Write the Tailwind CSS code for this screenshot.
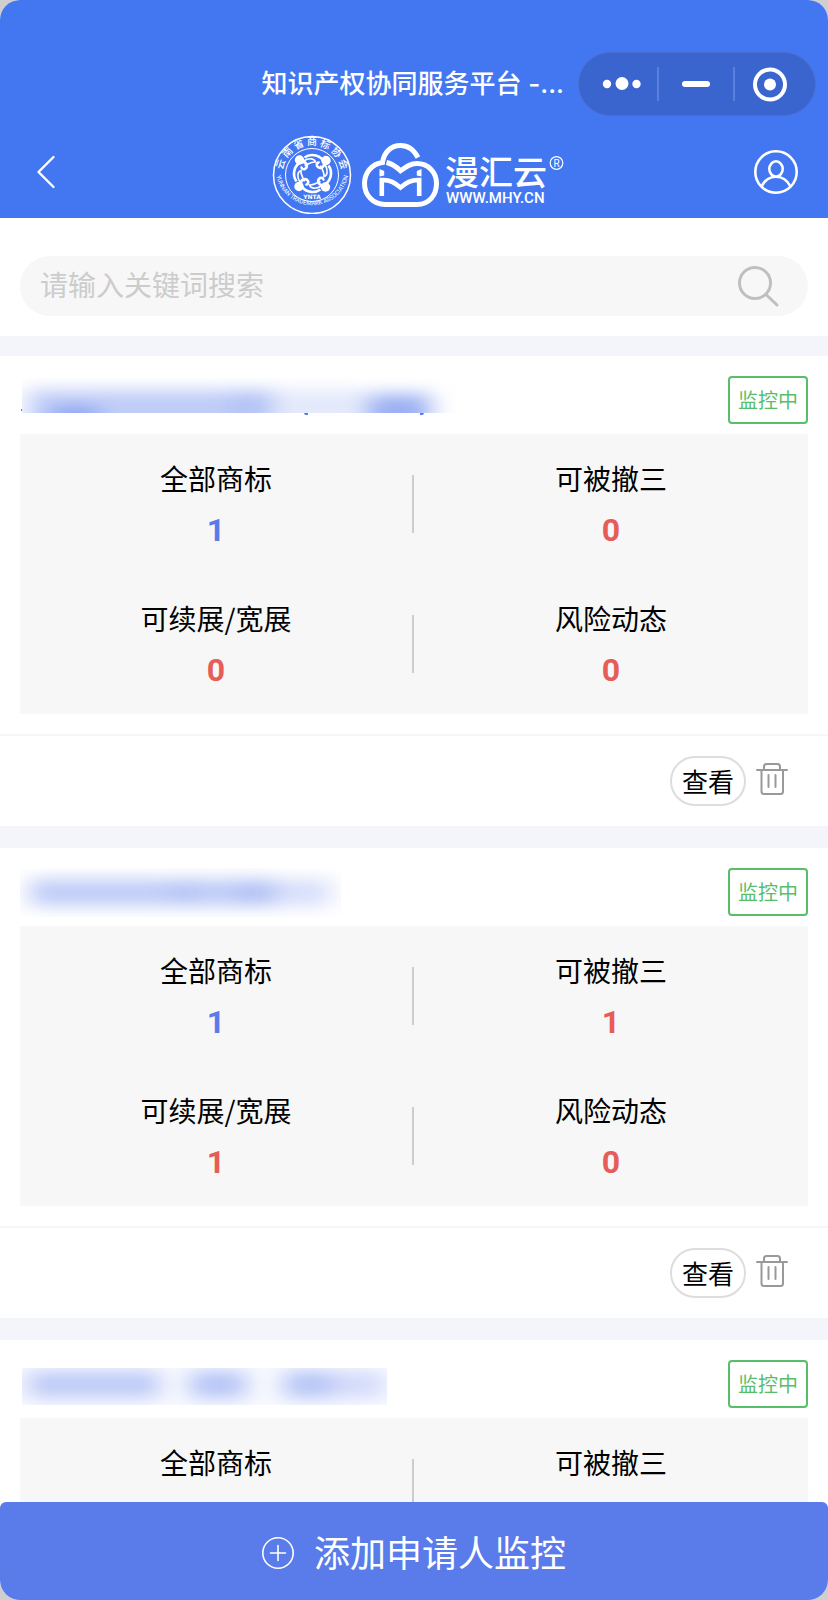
<!DOCTYPE html>
<html lang="zh-CN">
<head>
<meta charset="utf-8">
<meta name="viewport" content="width=device-width, initial-scale=1">
<title>知识产权协同服务平台</title>
<script src="https://cdn.jsdelivr.net/npm/@tailwindcss/browser@4"></script>
</head>
<body class="bg-[#cfcfcf] font-['Noto_Sans_CJK_SC',sans-serif] text-black">
<svg class="hidden" aria-hidden="true">
  <symbol id="trash" viewBox="0 0 32 34" fill="none" stroke="#999" stroke-width="2" stroke-linecap="round" stroke-linejoin="round">
    <path d="M1 8H31M8 8V4.500Q8 2 10.500 2H21.500Q24 2 24 4.500V8M5.500 8V29.500Q5.500 32 8 32H24.500Q27 32 27 29.500V8M12.500 13V25M19.500 13V25"/>
  </symbol>
</svg>
<div class="flex h-screen flex-col overflow-hidden rounded-[20px] bg-white">
  <header class="shrink-0 bg-[#4377f2] pt-[52px] pb-1 text-white">
    <div class="flex items-center justify-end gap-[14px] pr-3">
      <h1 class="font-[Inter,'Noto_Sans_CJK_SC',sans-serif] text-[26px] leading-8 font-medium whitespace-nowrap">知识产权协同服务平台 -...</h1>
      <div class="flex h-16 w-[238px] items-center rounded-full border border-[#4a6fd0] bg-[#3a65cf]">
        <button aria-label="更多" class="flex flex-1 justify-center pl-2">
          <svg class="h-4 w-10" viewBox="0 0 40 16" fill="currentColor"><circle cx="5" cy="8" r="4.200"/><circle cx="20" cy="7.500" r="6.500"/><circle cx="34.500" cy="8" r="4.200"/></svg>
        </button>
        <span class="h-[34px] w-0.5 bg-[#5b80dc]"></span>
        <button aria-label="最小化" class="flex w-[74px] justify-center"><span class="h-1.5 w-7 rounded-full bg-white"></span></button>
        <span class="h-[34px] w-0.5 bg-[#5b80dc]"></span>
        <button aria-label="关闭" class="flex flex-1 justify-center pr-2.5">
          <svg class="size-9" viewBox="0 0 36 36"><circle cx="18" cy="18.500" r="15" fill="none" stroke="#fff" stroke-width="4"/><circle cx="18" cy="18.500" r="6" fill="#fff"/></svg>
        </button>
      </div>
    </div>
    <div class="mt-[14px] flex items-center justify-between pr-[30px] pl-9">
      <button aria-label="返回" class="w-[46px]">
        <svg class="h-[34px] w-5" viewBox="0 0 20 34" fill="none" stroke="#fff" stroke-width="2.400" stroke-linecap="round" stroke-linejoin="round"><path d="M17.500 2L2.500 17L17.500 32"/></svg>
      </button>
      <svg class="h-[84px] w-[296px]" viewBox="270 130 296 84" role="img" aria-label="云南省商标协会 漫汇云" fill="none" stroke="#fff">
        <defs>
          <path id="arcTop" d="M283.700 183A29.500 29.500 0 1 1 340.300 183"/>
          <path id="arcBottom" d="M276 173A36.500 36.500 0 0 0 348.500 173"/>
          <g id="swirl">
            <circle cx="-13" cy="-13.500" r="4.700" fill="#fff" stroke="none"/>
            <path d="M-8 -16C-1 -21 9 -18 11.500 -11C12.500 -6 7 -4 4.500 -7.500C3.500 -10 5.500 -11.500 7 -10.500" stroke-width="2.600"/>
            <path d="M-9 -12.500C-3 -16 2 -15 3 -11.500C-1 -12 -5 -9 -8 -8" stroke-width="1.600"/>
          </g>
        </defs>
        <circle cx="312" cy="175" r="38.500" stroke-width="1.500"/>
        <circle cx="312" cy="175" r="26.500" stroke-width="1"/>
        <g fill="#fff" stroke="none">
          <text font-size="10" font-weight="500" text-anchor="middle"><textPath href="#arcTop" startOffset="50%">云 南 省 商 标 协 会</textPath></text>
          <text font-size="6" font-family="Roboto, sans-serif" text-anchor="middle"><textPath href="#arcBottom" startOffset="50%">YUNNAN TRADEMARK ASSOCIATION</textPath></text>
          <text x="312" y="199" font-size="6" font-family="DejaVu Sans, sans-serif" font-weight="700" text-anchor="middle">YNTA</text>
        </g>
        <g transform="translate(312.500 173.500)">
          <use href="#swirl"/><use href="#swirl" transform="rotate(90)"/><use href="#swirl" transform="rotate(180)"/><use href="#swirl" transform="rotate(270)"/>
        </g>
        <g stroke-width="5">
          <path d="M418 157.500C414 150 408 145.500 400.500 145.500C391 145.500 384 152 382.500 162.500C371.500 164 364.500 173 364.500 183.500C364.500 195 373 204.500 385 204.500H417C429 204.500 436.500 195 436.500 183.500C436.500 172 428 163.500 417 163.500C410 163.500 406 167 400.500 170.800C396 166.500 391.500 163.500 386.500 162.500"/>
          <path stroke-width="4.600" d="M381.800 196V180C390 179.500 395 183 400.500 187.500C406 183 411 179.500 419.200 180V196"/>
        </g>
        <path fill="#fff" stroke="none" d="M379.500 169L384.200 171V175.500L379.500 176.500ZM421.500 169L416.800 171V175.500L421.500 176.500Z"/>
        <g fill="#fff" stroke="none">
          <text x="445" y="185" font-size="34" font-weight="500">漫汇云</text>
          <text x="446" y="203" font-size="15" font-family="Roboto, sans-serif" font-weight="500">WWW.MHY.CN</text>
          <text x="556.500" y="166.500" font-size="10" font-family="Roboto, sans-serif" text-anchor="middle">R</text>
        </g>
        <circle cx="556.500" cy="163" r="6.300" stroke-width="1.200"/>
      </svg>
      <button aria-label="个人中心">
        <svg class="size-11" viewBox="0 0 44 44" fill="none" stroke="#fff" stroke-width="2.600"><circle cx="22" cy="22" r="20.700"/><ellipse cx="22" cy="19" rx="6.700" ry="7.700"/><path d="M7.500 36.500C10.500 30.500 15.500 26.700 22 26.700S33.500 30.500 36.500 36.500"/></svg>
      </button>
    </div>
  </header>

  <main class="min-h-0 flex-1 overflow-hidden bg-[#f4f5fa]">
    <form class="bg-white px-5 pt-[38px] pb-5" onsubmit="return false">
      <div class="flex h-[60px] items-center rounded-full bg-[#f7f7f7] pr-7 pl-5">
        <input type="search" aria-label="关键词搜索" placeholder="请输入关键词搜索" class="min-w-0 flex-1 bg-transparent pb-1 text-[28px] leading-10 outline-none placeholder:text-[#ccc]">
        <button aria-label="搜索">
          <svg class="size-[44px]" viewBox="0 0 44 44" fill="none" stroke="#bfbfbf" stroke-width="3" stroke-linecap="round"><circle cx="19" cy="19" r="15.500"/><path d="M30 30.500L41 41"/></svg>
        </button>
      </div>
    </form>

    <article class="mt-5 bg-white pt-5">
      <div class="mx-5 flex h-[58px] items-start justify-between">
        <svg class="h-[42px] w-[440px]" viewBox="20 376 440 42" role="img" aria-label="申请人名称已隐藏">
          <defs>
            <filter id="soft" filterUnits="userSpaceOnUse" x="-40" y="300" width="560" height="1200" color-interpolation-filters="sRGB"><feGaussianBlur stdDeviation="12 8"/></filter>
            <clipPath id="clip1"><rect x="22" y="378" width="438" height="35"/></clipPath>
          </defs>
          <g clip-path="url(#clip1)"><g filter="url(#soft)" fill="#5a7bea">
            <rect x="28" y="390" width="246" height="42" opacity=".38"/><rect x="52" y="407" width="46" height="20" opacity=".5"/><rect x="230" y="392" width="40" height="26" opacity=".12"/><rect x="276" y="390" width="90" height="34" opacity=".17"/><rect x="368" y="394" width="62" height="36" opacity=".6"/>
          </g></g>
          <path d="M304 413h4v2h-3zM420 413h4l-1 2h-3z" fill="#5a7bea"/><path d="M21 409h1v2h-1z" fill="#5a7bea"/>
        </svg>
        <span class="flex h-12 w-20 items-center justify-center rounded border-2 border-[#58be6a] text-xl text-[#58be6a]">监控中</span>
      </div>
      <dl class="mx-5 grid grid-cols-2 bg-[#f7f7f7] text-center text-[28px]">
        <div class="relative h-[140px] pt-6 pr-0.5"><dt class="leading-10">全部商标</dt><dd class="mt-3 font-[Roboto,sans-serif] text-[32px] leading-10 font-bold text-[#5a7bea]">1</dd><span class="absolute top-[41px] right-0 h-[58px] w-0.5 bg-[#ccc]"></span></div>
        <div class="h-[140px] pt-6"><dt class="leading-10">可被撤三</dt><dd class="mt-3 font-[Roboto,sans-serif] text-[32px] leading-10 font-bold text-[#e65d58]">0</dd></div>
        <div class="relative h-[140px] pt-6 pr-0.5"><dt class="leading-10">可续展/宽展</dt><dd class="mt-3 font-[Roboto,sans-serif] text-[32px] leading-10 font-bold text-[#e65d58]">0</dd><span class="absolute top-[41px] right-0 h-[58px] w-0.5 bg-[#ccc]"></span></div>
        <div class="h-[140px] pt-6"><dt class="leading-10">风险动态</dt><dd class="mt-3 font-[Roboto,sans-serif] text-[32px] leading-10 font-bold text-[#e65d58]">0</dd></div>
      </dl>
      <div class="mt-5 flex items-start justify-end gap-2.5 border-t-2 border-[#f6f6f6] pt-5 pr-10 pb-5">
        <button class="h-[50px] w-[76px] rounded-full border-2 border-[#ddd] text-[26px] leading-[46px]">查看</button>
        <button aria-label="删除" class="pt-1.5"><svg class="h-[34px] w-8"><use href="#trash"/></svg></button>
      </div>
    </article>

    <article class="mt-[22px] bg-white pt-5">
      <div class="mx-5 flex h-[58px] items-start justify-between">
        <svg class="h-[50px] w-[440px]" viewBox="20 868 440 50" role="img" aria-label="申请人名称已隐藏">
          <defs><clipPath id="clip2"><rect x="20" y="868" width="321" height="49"/></clipPath></defs>
          <g clip-path="url(#clip2)"><g filter="url(#soft)" fill="#5a7bea">
            <rect x="30" y="879" width="246" height="27" opacity=".38"/><rect x="276" y="879" width="54" height="27" opacity=".24"/><rect x="170" y="882" width="30" height="22" opacity=".1"/><rect x="236" y="882" width="36" height="22" opacity=".14"/>
          </g></g>
        </svg>
        <span class="flex h-12 w-20 items-center justify-center rounded border-2 border-[#58be6a] text-xl text-[#58be6a]">监控中</span>
      </div>
      <dl class="mx-5 grid grid-cols-2 bg-[#f7f7f7] text-center text-[28px]">
        <div class="relative h-[140px] pt-6 pr-0.5"><dt class="leading-10">全部商标</dt><dd class="mt-3 font-[Roboto,sans-serif] text-[32px] leading-10 font-bold text-[#5a7bea]">1</dd><span class="absolute top-[41px] right-0 h-[58px] w-0.5 bg-[#ccc]"></span></div>
        <div class="h-[140px] pt-6"><dt class="leading-10">可被撤三</dt><dd class="mt-3 font-[Roboto,sans-serif] text-[32px] leading-10 font-bold text-[#e65d58]">1</dd></div>
        <div class="relative h-[140px] pt-6 pr-0.5"><dt class="leading-10">可续展/宽展</dt><dd class="mt-3 font-[Roboto,sans-serif] text-[32px] leading-10 font-bold text-[#e65d58]">1</dd><span class="absolute top-[41px] right-0 h-[58px] w-0.5 bg-[#ccc]"></span></div>
        <div class="h-[140px] pt-6"><dt class="leading-10">风险动态</dt><dd class="mt-3 font-[Roboto,sans-serif] text-[32px] leading-10 font-bold text-[#e65d58]">0</dd></div>
      </dl>
      <div class="mt-5 flex items-start justify-end gap-2.5 border-t-2 border-[#f6f6f6] pt-5 pr-10 pb-5">
        <button class="h-[50px] w-[76px] rounded-full border-2 border-[#ddd] text-[26px] leading-[46px]">查看</button>
        <button aria-label="删除" class="pt-1.5"><svg class="h-[34px] w-8"><use href="#trash"/></svg></button>
      </div>
    </article>

    <article class="mt-[22px] bg-white pt-5">
      <div class="mx-5 flex h-[58px] items-start justify-between">
        <svg class="h-[50px] w-[440px]" viewBox="20 1360 440 50" role="img" aria-label="申请人名称已隐藏">
          <defs><clipPath id="clip3"><rect x="22" y="1368" width="365" height="37"/></clipPath></defs>
          <g clip-path="url(#clip3)"><rect x="22" y="1368" width="365" height="37" fill="#f9faff"/><g filter="url(#soft)" fill="#5a7bea">
            <rect x="28" y="1371" width="132" height="27" opacity=".36"/><rect x="190" y="1371" width="56" height="27" opacity=".42"/><rect x="284" y="1371" width="48" height="27" opacity=".42"/><rect x="332" y="1371" width="52" height="27" opacity=".24"/>
          </g></g>
        </svg>
        <span class="flex h-12 w-20 items-center justify-center rounded border-2 border-[#58be6a] text-xl text-[#58be6a]">监控中</span>
      </div>
      <dl class="mx-5 grid grid-cols-2 bg-[#f7f7f7] text-center text-[28px]">
        <div class="relative h-[140px] pt-6 pr-0.5"><dt class="leading-10">全部商标</dt><span class="absolute top-[41px] right-0 h-[58px] w-0.5 bg-[#ccc]"></span></div>
        <div class="h-[140px] pt-6"><dt class="leading-10">可被撤三</dt></div>
      </dl>
    </article>
  </main>

  <footer class="shrink-0 bg-white">
    <button class="flex h-[98px] w-full items-center justify-center gap-5 rounded-t-md bg-[#5a7bea] text-4xl text-white">
      <svg class="mt-1 size-8" viewBox="0 0 32 32" fill="none" stroke="#fff" stroke-width="1.600" stroke-linecap="round"><circle cx="16" cy="16" r="15.200"/><path d="M8.500 16H23.500M16 8.500V23.500"/></svg>
      添加申请人监控
    </button>
  </footer>
</div>
</body>
</html>
